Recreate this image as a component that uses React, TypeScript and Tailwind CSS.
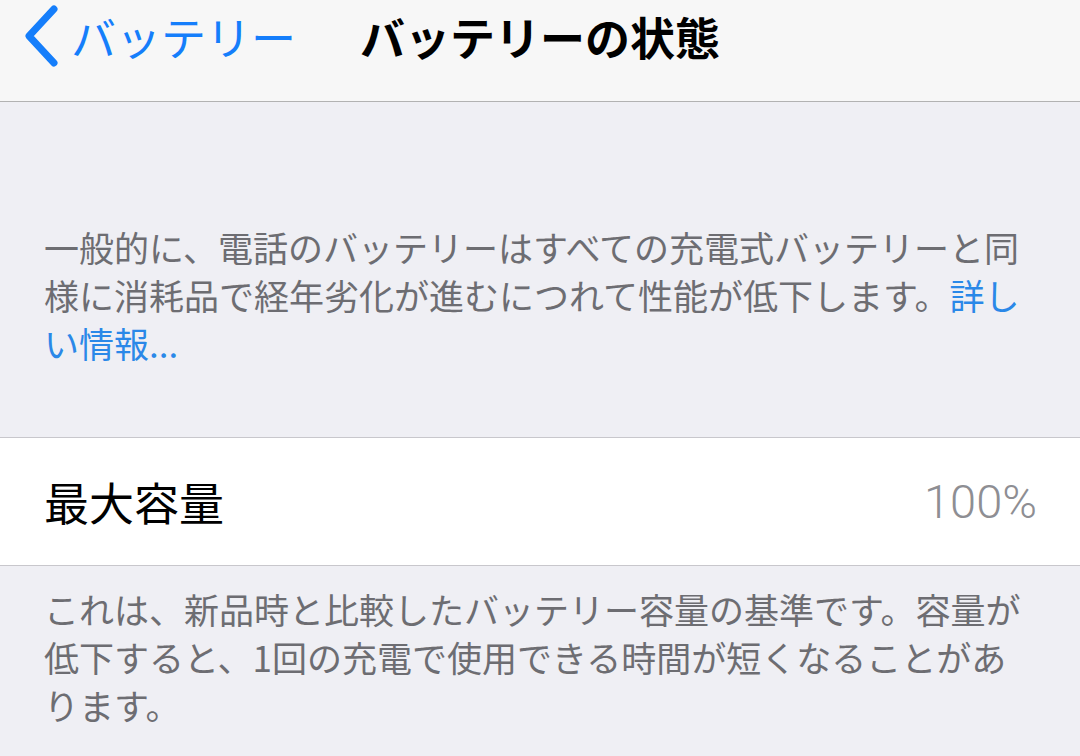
const jp = "font-['Noto_Sans_CJK_JP','Noto_Sans',sans-serif]";

function BackChevron() {
  return (
    <svg width="40" height="66" viewBox="0 0 40 66" className="shrink-0">
      <path
        d="M33 6 L8 33 L33 60"
        fill="none"
        stroke="#157efb"
        strokeWidth="7"
        strokeLinecap="round"
        strokeLinejoin="round"
      />
    </svg>
  );
}

export default function App() {
  return (
    <div className={`h-[756px] w-[1080px] overflow-hidden bg-[#efeff4] ${jp}`}>
      {/* Nav bar */}
      <div className="relative h-[102px] border-b border-[#b2b2b2] bg-[#f7f7f7]">
        <div className="flex h-[72px] items-center pl-[21px]">
          <BackChevron />
          <span className="ml-[10px] text-[45px] leading-none text-[#157efb]">バッテリー</span>
        </div>
        <div className="absolute left-0 right-0 top-0 flex h-[72px] items-center justify-center">
          <span className="text-[45px] font-bold leading-none text-black">バッテリーの状態</span>
        </div>
      </div>

      {/* Header description */}
      <p className="px-[44px] pt-[121px] pb-[70px] text-[35px] leading-[48px] text-[#6d6d72]">
        一般的に、電話のバッテリーはすべての充電式バッテリーと同
        <br />
        様に消耗品で経年劣化が進むにつれて性能が低下します。
        <span className="text-[#2a88e8]">詳し</span>
        <br />
        <span className="text-[#2a88e8]">い情報...</span>
      </p>

      {/* Cell */}
      <div className="flex h-[129px] items-center justify-between border-y border-[#c8c7cc] bg-white pl-[44px] pr-[43px]">
        <span className="text-[45px] leading-none text-black">最大容量</span>
        <span className="font-['Roboto',sans-serif] text-[47px] font-light leading-none text-[#8e8e93]">100%</span>
      </div>

      {/* Footer description */}
      <p className="px-[44px] pt-[19px] text-[35px] leading-[48px] text-[#6d6d72]">
        これは、新品時と比較したバッテリー容量の基準です。容量が
        <br />
        低下すると、1回の充電で使用できる時間が短くなることがあ
        <br />
        ります。
      </p>
    </div>
  );
}
